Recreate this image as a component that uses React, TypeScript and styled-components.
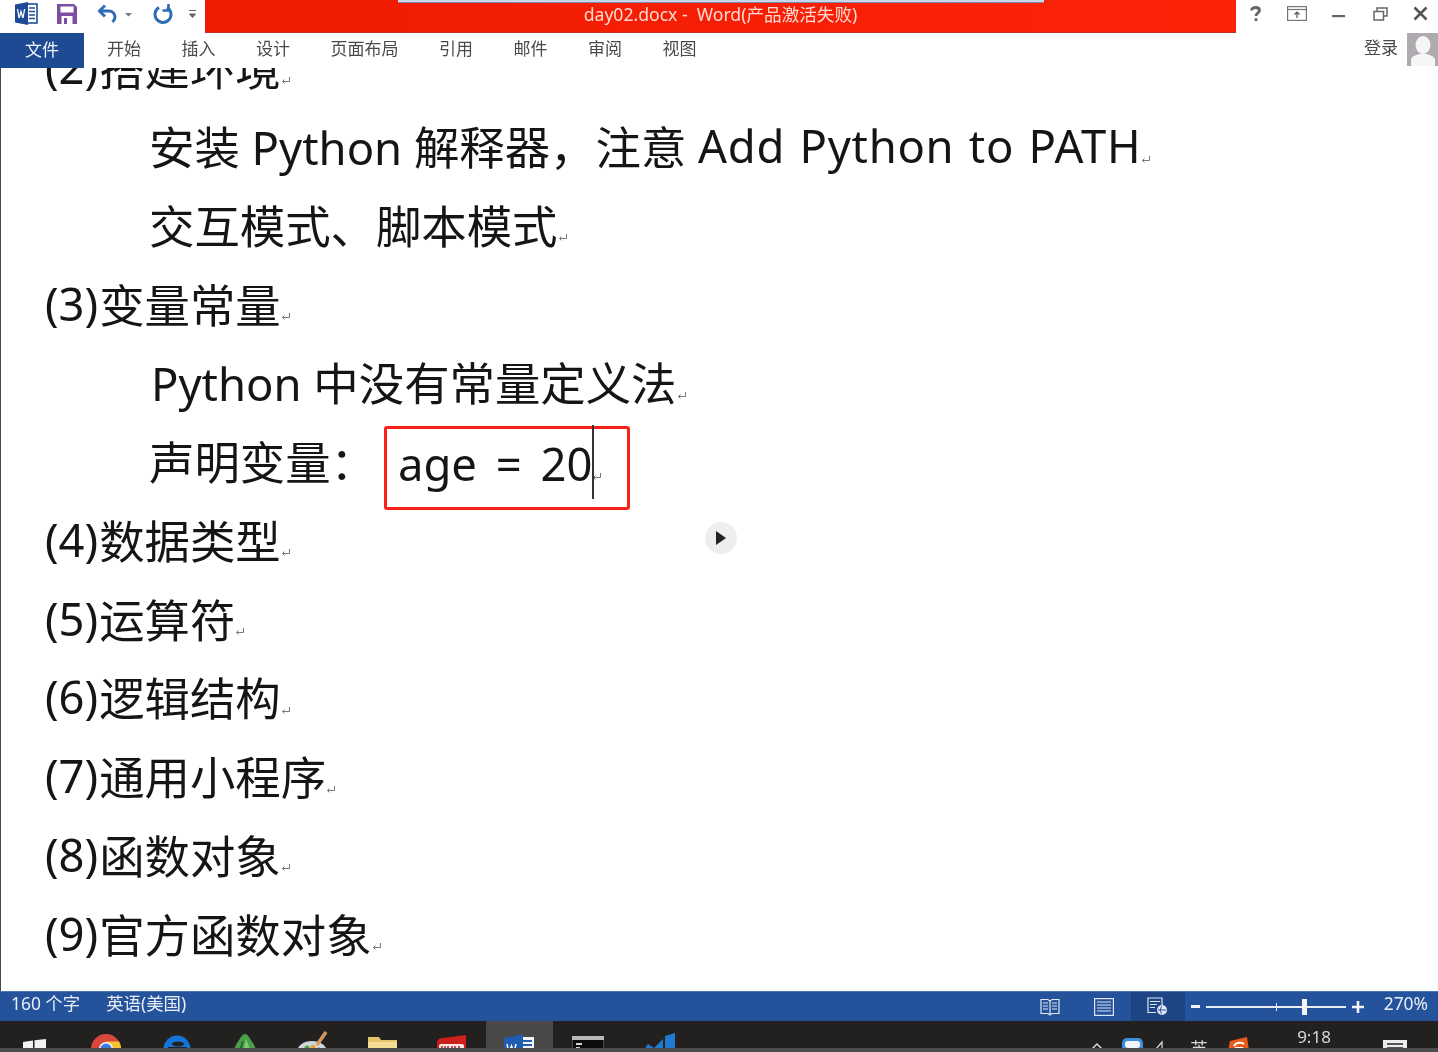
import React from "react";
import styled, { createGlobalStyle } from "styled-components";

const GlobalStyle = createGlobalStyle`
  html, body {
    margin: 0;
    padding: 0;
    background: #fff;
  }
`;

const Frame = styled.div`
  width: 1438px;
  height: 1052px;
  display: flex;
  flex-direction: column;
  overflow: hidden;
  position: relative;
  font-family: "Noto Sans", "Noto Sans CJK SC", sans-serif;
`;

const TitleBar = styled.div`
  height: 33px;
  flex: none;
  display: flex;
  background: #fff;
`;

const QuickAccess = styled.div`
  width: 205px;
  flex: none;
  display: flex;
  align-items: center;
  padding: 0 0 6px 15px;
  box-sizing: border-box;
`;

const QuickIcon = styled.svg<{ $gap?: number }>`
  flex: none;
  display: block;
  margin-left: ${(p) => p.$gap ?? 0}px;
`;

const RedBanner = styled.div`
  width: 1031px;
  flex: none;
  background: linear-gradient(90deg, #f01a00, #fb2409);
  border-bottom: 1px solid #b8392c;
  box-sizing: border-box;
  display: flex;
  flex-direction: column;
  align-items: center;
`;

const Sliver = styled.div`
  width: 646px;
  height: 3px;
  background: #c9d8ee;
  border-bottom: 1px solid #7e8ba8;
  box-sizing: border-box;
`;

const TitleText = styled.div`
  color: #ffd9d2;
  font-size: 17.6px;
  line-height: 22px;
  white-space: pre;
  filter: blur(0.3px);
`;

const WindowControls = styled.div`
  flex: 1;
  display: flex;
  align-items: center;
  padding: 0 10px 6px 14px;
  justify-content: space-between;
`;

const TabRow = styled.div`
  height: 35px;
  flex: none;
  display: flex;
  align-items: center;
  background: #fff;
`;

const FileTab = styled.div`
  width: 84px;
  height: 35px;
  box-sizing: border-box;
  padding-bottom: 5px;
  flex: none;
  background: #1d4a92;
  color: #f2f5fb;
  font-size: 17px;
  display: flex;
  align-items: center;
  justify-content: center;
  filter: blur(0.3px);
`;

const Tabs = styled.div`
  display: flex;
  gap: 40.5px;
  margin-left: 23px;
  flex: 1;
`;

const Tab = styled.div`
  color: #4a4a4a;
  font-size: 17px;
  line-height: 32px;
  margin-top: -3px;
  filter: blur(0.35px);
`;

const Account = styled.div`
  display: flex;
  align-items: flex-start;
  gap: 9px;
  height: 35px;
`;

const LoginText = styled.div`
  color: #4a4a4a;
  font-size: 17px;
  line-height: 30px;
  filter: blur(0.35px);
`;

const Doc = styled.div`
  flex: 1;
  min-height: 0;
  overflow: hidden;
  background: #fff;
  border-left: 1px solid #4a4a4a;
  position: relative;
`;

const Lines = styled.div`
  margin-top: -41px;
  color: #151515;
  font-size: 45.4px;
  filter: blur(0.3px);
`;

const Line = styled.div<{ $indent: number }>`
  height: 78.75px;
  display: flex;
  align-items: center;
  padding-left: ${(p) => p.$indent}px;
  white-space: pre;
`;

const Num = styled.span`
  margin-right: 1px;
`;

const WideLatin = styled.span`
  letter-spacing: 0.7px;
  word-spacing: 2px;
`;

const Mark = styled.svg`
  flex: none;
  margin: 29px 0 0 0;
`;

const Highlight = styled.div`
  position: relative;
  width: 246px;
  height: 84px;
  margin: 15px 0 0 8px;
  flex: none;
  box-sizing: border-box;
  border: 3px solid #fb2018;
  border-radius: 3px;
  padding: 0 0 10px 11px;
  display: flex;
  align-items: center;
  word-spacing: 7px;
  font-size: 45.4px;
`;

const Caret = styled.div`
  position: absolute;
  left: 205px;
  top: -4px;
  width: 2px;
  height: 74px;
  background: #333;
`;

const PlayButton = styled.div`
  position: absolute;
  left: 704px;
  top: 454px;
  width: 32px;
  height: 32px;
  border-radius: 50%;
  background: #eee;
  display: flex;
  align-items: center;
  justify-content: center;
`;

const StatusBar = styled.div`
  height: 30px;
  flex: none;
  box-sizing: border-box;
  background: #24539b;
  border-top: 1px solid #4a76b4;
  display: flex;
  align-items: center;
  color: #e8edf6;
  font-size: 17.4px;
`;

const StatusText = styled.div<{ $left: number }>`
  margin: -8px 0 0 ${(p) => p.$left}px;
  white-space: pre;
  filter: blur(0.3px);
`;

const StatusRight = styled.div`
  margin-left: auto;
  height: 100%;
  display: flex;
  align-items: center;
`;

const ViewButton = styled.div<{ $active?: boolean }>`
  width: 54px;
  height: 100%;
  display: flex;
  align-items: center;
  justify-content: center;
  background: ${(p) => (p.$active ? "#1d4585" : "transparent")};
`;

const ZoomSign = styled.svg`
  flex: none;
  margin-left: 6px;
`;

const Slider = styled.div`
  width: 140px;
  height: 2px;
  background: #e8edf6;
  position: relative;
  margin-left: 6px;
`;

const SliderTick = styled.div`
  position: absolute;
  left: 70px;
  top: -3px;
  width: 1px;
  height: 8px;
  background: #e8edf6;
`;

const SliderThumb = styled.div`
  position: absolute;
  left: 96px;
  top: -7px;
  width: 5px;
  height: 16px;
  background: #f4f6fa;
`;

const ZoomValue = styled.div`
  margin: -8px 10px 0 20px;
  filter: blur(0.3px);
`;

const Taskbar = styled.div`
  height: 31px;
  flex: none;
  box-sizing: border-box;
  background: #232120;
  border-bottom: 4px solid #4c4c4c;
  display: flex;
  overflow: hidden;
`;

const TaskSlot = styled.div<{ $width: number; $active?: boolean }>`
  width: ${(p) => p.$width}px;
  flex: none;
  display: flex;
  justify-content: center;
  background: ${(p) => (p.$active ? "#4a4846" : "transparent")};
`;

const TaskIcon = styled.svg<{ $top: number }>`
  flex: none;
  margin-top: ${(p) => p.$top}px;
`;

const TrayText = styled.div<{ $top: number; $size: number }>`
  color: #d8d8d8;
  font-size: ${(p) => p.$size}px;
  line-height: 1;
  margin-top: ${(p) => p.$top}px;
  filter: blur(0.3px);
`;

const ReturnMark = () => (
  <Mark width="10" height="10" viewBox="0 0 10 10" fill="none" stroke="#777" strokeWidth="1">
    <path d="M8.500 1v4.500H1.500M3.500 3.500l-2 2 2 2" />
  </Mark>
);

const lowerLines = [
  ["(4)", "数据类型"],
  ["(5)", "运算符"],
  ["(6)", "逻辑结构"],
  ["(7)", "通用小程序"],
  ["(8)", "函数对象"],
  ["(9)", "官方函数对象"],
];

const tabs = ["开始", "插入", "设计", "页面布局", "引用", "邮件", "审阅", "视图"];

export default function App() {
  return (
    <Frame>
      <GlobalStyle />
      <TitleBar>
        <QuickAccess>
          <QuickIcon width="23" height="23" viewBox="0 0 23 23">
            <rect x="9" y="2" width="13" height="19" fill="#fff" stroke="#1f4e9c" strokeWidth="1.600" />
            <path d="M14 6h6M14 9.500h6M14 13h6M14 16.500h6" stroke="#1f4e9c" strokeWidth="1.500" />
            <path d="M0 2.500 13 0v23L0 20.500z" fill="#1c4a96" />
            <path d="M2.500 7l1.600 9 1.900-6.500L8 16l1.600-9" fill="none" stroke="#fff" strokeWidth="1.300" />
          </QuickIcon>
          <QuickIcon $gap={19} width="20" height="20" viewBox="0 0 20 20">
            <path d="M0 0h17l3 3v17H0z" fill="#7b4ea3" />
            <rect x="3.500" y="2.500" width="13" height="6" fill="#fff" />
            <rect x="4.500" y="12" width="11" height="8" fill="#fff" />
            <rect x="7" y="14" width="3" height="6" fill="#7b4ea3" />
          </QuickIcon>
          <QuickIcon $gap={20} width="21" height="20" viewBox="0 0 21 20" fill="none" stroke="#2f6db5" strokeWidth="3">
            <path d="M8 1.500 2.500 7l5.500 5.500" />
            <path d="M3 7h9a6 6 0 0 1 6 6c0 2-1 3.500-2.500 5" />
          </QuickIcon>
          <QuickIcon $gap={6} width="9" height="20" viewBox="0 0 9 20">
            <path d="M1 9h7l-3.500 3.500z" fill="#777" />
          </QuickIcon>
          <QuickIcon $gap={20} width="20" height="21" viewBox="0 0 20 21" fill="none" stroke="#2f6db5" strokeWidth="3">
            <path d="M6 4.500a8 8 0 1 0 8 0" />
            <path d="M15.500 1v6.500H9.500" strokeWidth="2.600" />
          </QuickIcon>
          <QuickIcon $gap={15} width="9" height="14" viewBox="0 0 9 14">
            <path d="M1 3.500h7M1.500 7h6l-3 3.500z" fill="#666" stroke="#666" strokeWidth="1" />
          </QuickIcon>
        </QuickAccess>
        <RedBanner>
          <Sliver />
          <TitleText>day02.docx -  Word(产品激活失败)</TitleText>
        </RedBanner>
        <WindowControls>
          <svg width="12" height="16" viewBox="0 0 12 16" fill="none" stroke="#666" strokeWidth="2.800">
            <path d="M1.500 4.500C1.500 2.500 3.500 1.500 5.500 1.500c2.500 0 4 1.300 4 3 0 2.500-3.500 2.500-3.500 5.500" />
            <path d="M6 12.200v2.800" />
          </svg>
          <svg width="20" height="15" viewBox="0 0 20 15" fill="none" stroke="#777" strokeWidth="1.200">
            <rect x="0.600" y="0.600" width="18.800" height="13.800" />
            <path d="M1 3.500h18" />
            <path d="M10 12V6M7.500 8.500 10 6l2.500 2.500" stroke="#555" />
          </svg>
          <svg width="17" height="16" viewBox="0 0 17 16">
            <rect x="0" y="9" width="13" height="2.200" fill="#666" />
          </svg>
          <svg width="15" height="14" viewBox="0 0 15 14" fill="none" stroke="#666" strokeWidth="1.500">
            <rect x="1" y="4.500" width="9.500" height="8.500" />
            <path d="M4 4V1h10v8h-3" />
          </svg>
          <svg width="15" height="15" viewBox="0 0 15 15" fill="none" stroke="#555" strokeWidth="2.600">
            <path d="M1.500 1.500l12 12M13.500 1.500l-12 12" />
          </svg>
        </WindowControls>
      </TitleBar>

      <TabRow>
        <FileTab>文件</FileTab>
        <Tabs>
          {tabs.map((t) => (
            <Tab key={t}>{t}</Tab>
          ))}
        </Tabs>
        <Account>
          <LoginText>登录</LoginText>
          <svg width="31" height="33" viewBox="0 0 31 33">
            <rect width="31" height="33" fill="#aeaab0" />
            <ellipse cx="16" cy="12" rx="7.500" ry="9" fill="#f6f6f7" />
            <path d="M4 33v-6c0-4 6-5 8-6h8c2 1 8 2 8 6v6z" fill="#f6f6f7" />
          </svg>
        </Account>
      </TabRow>

      <Doc>
        <Lines>
          <Line $indent={44}>
            <Num>(2)</Num>搭建环境
            <ReturnMark />
          </Line>
          <Line $indent={148}>
            安装 Python 解释器，注意 <WideLatin>Add Python to PATH</WideLatin>
            <ReturnMark />
          </Line>
          <Line $indent={148}>
            交互模式、脚本模式
            <ReturnMark />
          </Line>
          <Line $indent={44}>
            <Num>(3)</Num>变量常量
            <ReturnMark />
          </Line>
          <Line $indent={150}>
            Python 中没有常量定义法
            <ReturnMark />
          </Line>
          <Line $indent={148}>
            声明变量：
            <Highlight>
              age = 20
              <ReturnMark />
              <Caret />
            </Highlight>
          </Line>
          {lowerLines.map(([num, text]) => (
            <Line key={num} $indent={44}>
              <Num>{num}</Num>
              {text}
              <ReturnMark />
            </Line>
          ))}
        </Lines>
        <PlayButton>
          <svg width="12" height="16" viewBox="0 0 12 16">
            <path d="M1 1l10 7-10 7z" fill="#222" />
          </svg>
        </PlayButton>
      </Doc>

      <StatusBar>
        <StatusText $left={11}>160 个字</StatusText>
        <StatusText $left={26}>英语(美国)</StatusText>
        <StatusRight>
          <ViewButton>
            <svg width="20" height="18" viewBox="0 0 20 18" fill="none" stroke="#dfe6f2" strokeWidth="1.200">
              <path d="M1 1.500h7l2 1.500 2-1.500h7v14h-7l-2 1.500-2-1.500H1z" />
              <path d="M3 5h5M3 8h5M3 11h5M12 5h5M12 8h5M12 11h5M10 3v14" />
            </svg>
          </ViewButton>
          <ViewButton>
            <svg width="20" height="18" viewBox="0 0 20 18" fill="none" stroke="#dfe6f2" strokeWidth="1.200">
              <rect x="0.600" y="0.600" width="18.800" height="16.800" />
              <path d="M3 4h14M3 7h14M3 10h14M3 13h14" />
            </svg>
          </ViewButton>
          <ViewButton $active>
            <svg width="21" height="19" viewBox="0 0 21 19" fill="none" stroke="#dfe6f2" strokeWidth="1.200">
              <path d="M9 15.500H1V1h14v7" />
              <path d="M3 4.500h10M3 7.500h7M3 10.500h5" />
              <circle cx="15" cy="13" r="5" fill="#dfe6f2" stroke="none" />
              <path d="M11 13h8M15 9c-2 2-2 6 0 8" stroke="#24539b" strokeWidth="1" />
            </svg>
          </ViewButton>
          <ZoomSign width="9" height="3" viewBox="0 0 9 3">
            <rect width="9" height="3" fill="#f0f3f9" />
          </ZoomSign>
          <Slider>
            <SliderTick />
            <SliderThumb />
          </Slider>
          <ZoomSign width="12" height="12" viewBox="0 0 12 12">
            <path d="M0 6h12M6 0v12" stroke="#f0f3f9" strokeWidth="2.600" />
          </ZoomSign>
          <ZoomValue>270%</ZoomValue>
        </StatusRight>
      </StatusBar>

      <Taskbar>
        <TaskSlot $width={69}>
          <TaskIcon $top={18} width="23" height="20" viewBox="0 0 23 20">
            <path d="M0 3l10-1.500V10H0zM11.500 1.300 23 0v10H11.500zM0 11.500h10V20L0 19zM11.500 11.500H23V20l-11.500-1.500z" fill="#f2f2f2" />
          </TaskIcon>
        </TaskSlot>
        <TaskSlot $width={74}>
          <TaskIcon $top={13} width="30" height="30" viewBox="0 0 30 30">
            <circle cx="15" cy="15" r="15" fill="#d8483a" />
            <path d="M15 15 28 22.500A15 15 0 0 1 15 30 15 15 0 0 1 2 22.500z" fill="#3f9a4e" />
            <path d="M15 7.500H28A15 15 0 0 1 28 22.500L15 30z" fill="#f4c431" />
            <circle cx="15" cy="15" r="7" fill="#f3f3f3" />
            <circle cx="15" cy="15" r="5.500" fill="#3f7de0" />
          </TaskIcon>
        </TaskSlot>
        <TaskSlot $width={67}>
          <TaskIcon $top={14} width="28" height="28" viewBox="0 0 28 28">
            <circle cx="14" cy="14" r="13.500" fill="#1375d6" />
            <rect x="5" y="12" width="19" height="3" fill="#232120" />
            <ellipse cx="15" cy="9" rx="6" ry="2.500" fill="#232120" />
          </TaskIcon>
        </TaskSlot>
        <TaskSlot $width={70}>
          <TaskIcon $top={12} width="34" height="30" viewBox="0 0 34 30">
            <path d="M17 1c3 0 5 5 8 9l9 18H0L9 10c3-4 5-9 8-9z" fill="#4aa04a" />
            <path d="M18 6 26 26H13z" fill="#7fca70" />
            <path d="M15 8 10 24" stroke="#1f6b2b" strokeWidth="2" />
          </TaskIcon>
        </TaskSlot>
        <TaskSlot $width={67}>
          <TaskIcon $top={8} width="34" height="34" viewBox="0 0 34 34">
            <ellipse cx="15" cy="23" rx="15" ry="11" fill="#cfd8e0" />
            <circle cx="10" cy="19" r="2.500" fill="#4d9d48" />
            <circle cx="16" cy="18" r="2.500" fill="#e2a73a" />
            <circle cx="22" cy="21" r="2.500" fill="#cf4e40" />
            <path d="M20 16 29 3" stroke="#d59a5e" strokeWidth="3.500" />
          </TaskIcon>
        </TaskSlot>
        <TaskSlot $width={70}>
          <TaskIcon $top={16} width="31" height="24" viewBox="0 0 31 24">
            <path d="M1 0h11l2 3h16v21H1z" fill="#e5c56c" />
            <rect x="1" y="5" width="29" height="19" fill="#f6dd95" />
          </TaskIcon>
        </TaskSlot>
        <TaskSlot $width={69}>
          <TaskIcon $top={14} width="34" height="28" viewBox="0 0 34 28">
            <path d="M2 8 Q2 3 8 3 L31 0 V28 H2z" fill="#cd1f1c" />
            <rect x="4" y="9" width="25" height="9" rx="2" fill="#f4e9e6" />
            <path d="M7 11v5M10 11v5M13 11v5M17 11v5M20 11v5M24 11v5" stroke="#b02020" strokeWidth="1.500" />
          </TaskIcon>
        </TaskSlot>
        <TaskSlot $width={67} $active>
          <TaskIcon $top={13} width="31" height="30" viewBox="0 0 31 30">
            <rect x="15" y="3" width="15" height="22" fill="#f0f3f8" />
            <path d="M19 7h9M19 11h9M19 15h9" stroke="#2a5caa" strokeWidth="2" />
            <path d="M0 4 19 0v30L0 26z" fill="#1f5db3" />
            <path d="M3 10l2 9 2.500-7 2.500 7 2-9" fill="none" stroke="#fff" strokeWidth="1.500" />
          </TaskIcon>
        </TaskSlot>
        <TaskSlot $width={69}>
          <TaskIcon $top={15} width="32" height="26" viewBox="0 0 32 26">
            <rect width="32" height="26" fill="#0c0c0c" stroke="#8a8a8a" />
            <rect x="0" y="0" width="32" height="4" fill="#b9b9b9" />
            <path d="M4 8h6M4 12h4M15 15h8" stroke="#d6d6d6" strokeWidth="1.800" />
          </TaskIcon>
        </TaskSlot>
        <TaskSlot $width={75}>
          <TaskIcon $top={12} width="32" height="30" viewBox="0 0 32 30">
            <path d="M21 3 31 0v30l-10-3z" fill="#1f7ad2" />
            <path d="M0 17 4 11l6 4 9-9v9l-9 8-6-4-4 3z" fill="#1f7ad2" />
          </TaskIcon>
        </TaskSlot>
        <TaskSlot $width={380} />
        <TaskSlot $width={40}>
          <TaskIcon $top={21} width="14" height="8" viewBox="0 0 14 8" fill="none" stroke="#d8d8d8" strokeWidth="1.500">
            <path d="M2 7l5-5 5 5" />
          </TaskIcon>
        </TaskSlot>
        <TaskSlot $width={30}>
          <TaskIcon $top={17} width="21" height="22" viewBox="0 0 21 22">
            <rect width="21" height="22" rx="5" fill="#3d8fe0" />
            <rect x="3" y="3" width="15" height="7" rx="3" fill="#f2f6fb" />
            <circle cx="10.500" cy="13" r="4" fill="#f2f6fb" />
          </TaskIcon>
        </TaskSlot>
        <TaskSlot $width={30}>
          <TaskIcon $top={19} width="20" height="14" viewBox="0 0 20 14" fill="none" stroke="#d8d8d8" strokeWidth="1.300">
            <path d="M1 9h3l6-7v12" />
            <path d="M13 10h5" stroke="#c33" strokeWidth="2" />
          </TaskIcon>
        </TaskSlot>
        <TaskSlot $width={44}>
          <TrayText $top={19} $size={18}>英</TrayText>
        </TaskSlot>
        <TaskSlot $width={34}>
          <TaskIcon $top={16} width="21" height="20" viewBox="0 0 21 20">
            <path d="M2 4 19 0l2 14H0z" fill="#ea5a1b" />
            <path d="M6 9c2-4 8-4 10-2M7 11h8" fill="none" stroke="#fff" strokeWidth="2" />
          </TaskIcon>
        </TaskSlot>
        <TaskSlot $width={118}>
          <TrayText $top={7} $size={17}>9:18</TrayText>
        </TaskSlot>
        <TaskSlot $width={44}>
          <TaskIcon $top={19} width="24" height="14" viewBox="0 0 24 14">
            <rect width="24" height="14" fill="#ececec" />
            <path d="M4 4h16M4 8h16" stroke="#232120" strokeWidth="1.500" />
          </TaskIcon>
        </TaskSlot>
      </Taskbar>
    </Frame>
  );
}
